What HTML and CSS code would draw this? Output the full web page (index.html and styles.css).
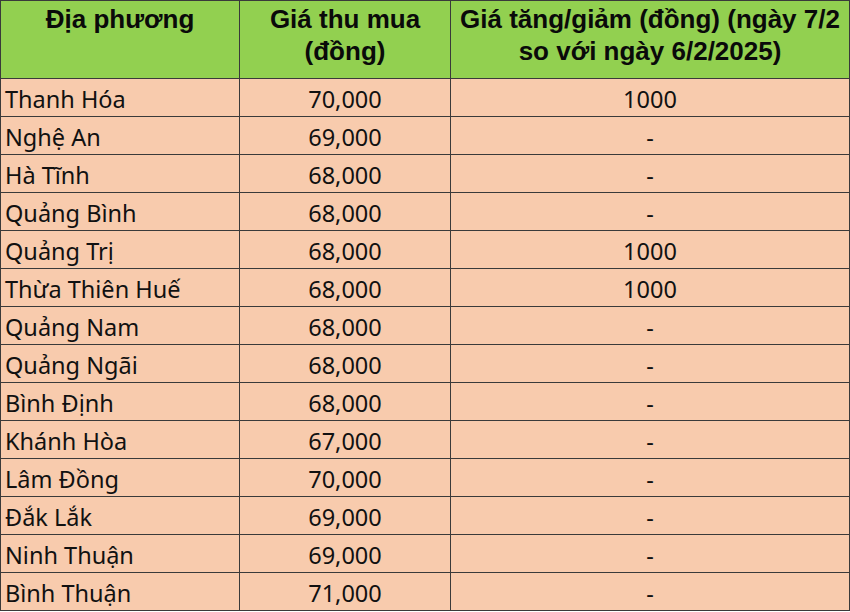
FILE: index.html
```html
<!DOCTYPE html>
<html lang="vi">
<head>
<meta charset="utf-8">
<link rel="stylesheet" href="styles.css">
</head>
<body>
<table class="price-table">
  <colgroup>
    <col class="c1"><col class="c2"><col class="c3">
  </colgroup>
  <thead>
    <tr>
      <th>Địa phương</th>
      <th>Giá thu mua<br>(đồng)</th>
      <th>Giá tăng/giảm (đồng) (ngày 7/2<br>so với ngày 6/2/2025)</th>
    </tr>
  </thead>
  <tbody>
    <tr><td class="name">Thanh Hóa</td><td>70,000</td><td>1000</td></tr>
    <tr><td class="name">Nghệ An</td><td>69,000</td><td>-</td></tr>
    <tr><td class="name">Hà Tĩnh</td><td>68,000</td><td>-</td></tr>
    <tr><td class="name">Quảng Bình</td><td>68,000</td><td>-</td></tr>
    <tr><td class="name">Quảng Trị</td><td>68,000</td><td>1000</td></tr>
    <tr><td class="name">Thừa Thiên Huế</td><td>68,000</td><td>1000</td></tr>
    <tr><td class="name">Quảng Nam</td><td>68,000</td><td>-</td></tr>
    <tr><td class="name">Quảng Ngãi</td><td>68,000</td><td>-</td></tr>
    <tr><td class="name">Bình Định</td><td>68,000</td><td>-</td></tr>
    <tr><td class="name">Khánh Hòa</td><td>67,000</td><td>-</td></tr>
    <tr><td class="name">Lâm Đồng</td><td>70,000</td><td>-</td></tr>
    <tr><td class="name">Đắk Lắk</td><td>69,000</td><td>-</td></tr>
    <tr><td class="name">Ninh Thuận</td><td>69,000</td><td>-</td></tr>
    <tr><td class="name">Bình Thuận</td><td>71,000</td><td>-</td></tr>
  </tbody>
</table>
</body>
</html>
```
FILE: styles.css
```css
html, body {
  margin: 0;
  padding: 0;
  background: #ffffff;
}
.price-table {
  border-collapse: collapse;
  table-layout: fixed;
  width: 849px;
  color: #111;
}
.c1 { width: 239px; }
.c2 { width: 211px; }
.c3 { width: 399px; }
.price-table th,
.price-table td {
  border: 1px solid #3a3a3a;
  padding: 0;
}
.price-table th {
  background: #92d050;
  height: 78px;
  vertical-align: top;
  font-family: "Liberation Sans", Arial, sans-serif;
  font-weight: bold;
  font-size: 26px;
  line-height: 32px;
  padding-top: 2px;
  text-align: center;
  color: #0a0a0a;
  box-sizing: border-box;
}
.price-table td {
  background: #f8cbad;
  font-family: "Noto Sans", "Open Sans", sans-serif;
  font-size: 23.5px;
  text-align: center;
  vertical-align: middle;
  line-height: 34px;
  padding-top: 3px;
}
.price-table td.name {
  text-align: left;
  padding-left: 4px;
}
```
